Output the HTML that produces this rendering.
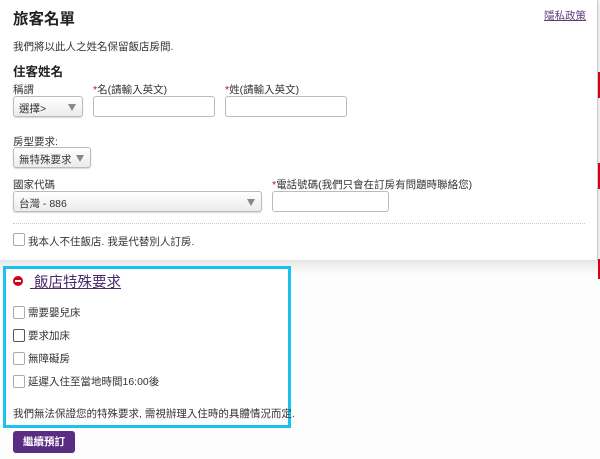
<!DOCTYPE html>
<html><head><meta charset="utf-8"><style>
*{margin:0;padding:0;box-sizing:border-box}
body{width:600px;height:459px;overflow:hidden;background:#fdfdfd;font-family:"Liberation Sans","Noto Sans CJK TC",sans-serif;color:#333;position:relative;font-size:10.5px}
.a{position:absolute;white-space:nowrap}
.card{position:absolute;left:0;top:0;width:598px;height:260px;background:#fff;border-right:1px solid #ccc;box-shadow:0 1px 3px rgba(0,0,0,.25)}
.shade{position:absolute;left:0;top:260px;width:600px;height:14px;background:linear-gradient(#e6e6e6,#fdfdfd)}
.sel{position:absolute;height:21px;border:1px solid #bbb;border-radius:3px;background:linear-gradient(#fff,#ececec);box-shadow:0 1px 1px rgba(0,0,0,.15);font-size:10.5px;padding:4px 0 0 5px;color:#333}
.sel:after{content:"";position:absolute;right:6px;top:7px;border-left:4px solid transparent;border-right:4px solid transparent;border-top:7px solid #888}
.inp{position:absolute;height:21px;border:1px solid #bbb;border-radius:3px;background:#fff}
.req{color:#d0021b}
.cb{position:absolute;width:12px;height:13px;border:1px solid #aaa;border-radius:2px;background:#fff}
.red{position:absolute;right:0;width:2px;background:#d0021b}
</style></head><body>
<div class="card"></div>
<div class="shade"></div>
<div class="red" style="top:72px;height:26px"></div>
<div class="red" style="top:163px;height:26px"></div>
<div class="red" style="top:259px;height:20px"></div>
<div class="a" style="left:13px;top:7px;font-size:15.5px;font-weight:bold;color:#222">旅客名單</div>
<div class="a" style="left:544px;top:8px;font-size:10.5px;color:#5a3f7a;text-decoration:underline">隱私政策</div>
<div class="a" style="left:13px;top:39px">我們將以此人之姓名保留飯店房間.</div>
<div class="a" style="left:13px;top:61px;font-size:12.5px;font-weight:bold;color:#222">住客姓名</div>
<div class="a" style="left:13px;top:82px">稱謂</div>
<div class="a" style="left:93px;top:82px"><span class="req">*</span>名(請輸入英文)</div>
<div class="a" style="left:225px;top:82px"><span class="req">*</span>姓(請輸入英文)</div>
<div class="sel" style="left:13px;top:96px;width:70px">選擇&gt;</div>
<div class="inp" style="left:93px;top:96px;width:122px"></div>
<div class="inp" style="left:225px;top:96px;width:122px"></div>
<div class="a" style="left:13px;top:134px">房型要求:</div>
<div class="sel" style="left:13px;top:147px;width:78px">無特殊要求</div>
<div class="a" style="left:13px;top:177px">國家代碼</div>
<div class="sel" style="left:13px;top:191px;width:249px">台灣 - 886</div>
<div class="a" style="left:272px;top:177px"><span class="req">*</span>電話號碼(我們只會在訂房有問題時聯絡您)</div>
<div class="inp" style="left:272px;top:191px;width:117px"></div>
<div class="a" style="left:13px;top:223px;width:572px;border-top:1px dotted #ccc"></div>
<div class="cb" style="left:13px;top:233px"></div>
<div class="a" style="left:28px;top:234px">我本人不住飯店. 我是代替別人訂房.</div>
<div class="a" style="left:3px;top:266px;width:288px;height:162px;border:3px solid #19c3ee;background:#fff"></div>
<div class="a" style="left:13px;top:276px;width:10px;height:10px;border-radius:50%;background:#d0021b"><div style="position:absolute;left:2px;top:4px;width:6px;height:2px;background:#fff"></div></div>
<div class="a" style="left:30px;top:271px;font-size:14.5px;color:#4a2a6a;text-decoration:underline">&nbsp;飯店特殊要求</div>
<div class="cb" style="left:13px;top:306px"></div><div class="a" style="left:28px;top:305px">需要嬰兒床</div>
<div class="cb" style="left:13px;top:329px;border-color:#555"></div><div class="a" style="left:28px;top:328px">要求加床</div>
<div class="cb" style="left:13px;top:352px"></div><div class="a" style="left:28px;top:351px">無障礙房</div>
<div class="cb" style="left:13px;top:375px"></div><div class="a" style="left:28px;top:374px">延遲入住至當地時間16:00後</div>
<div class="a" style="left:13px;top:406px">我們無法保證您的特殊要求, 需視辦理入住時的具體情況而定.</div>
<div class="a" style="left:13px;top:431px;width:62px;height:22px;border-radius:3px;background:#5a2d82;color:#fff;font-weight:bold;text-align:center;line-height:22px">繼續預訂</div>
</body></html>
